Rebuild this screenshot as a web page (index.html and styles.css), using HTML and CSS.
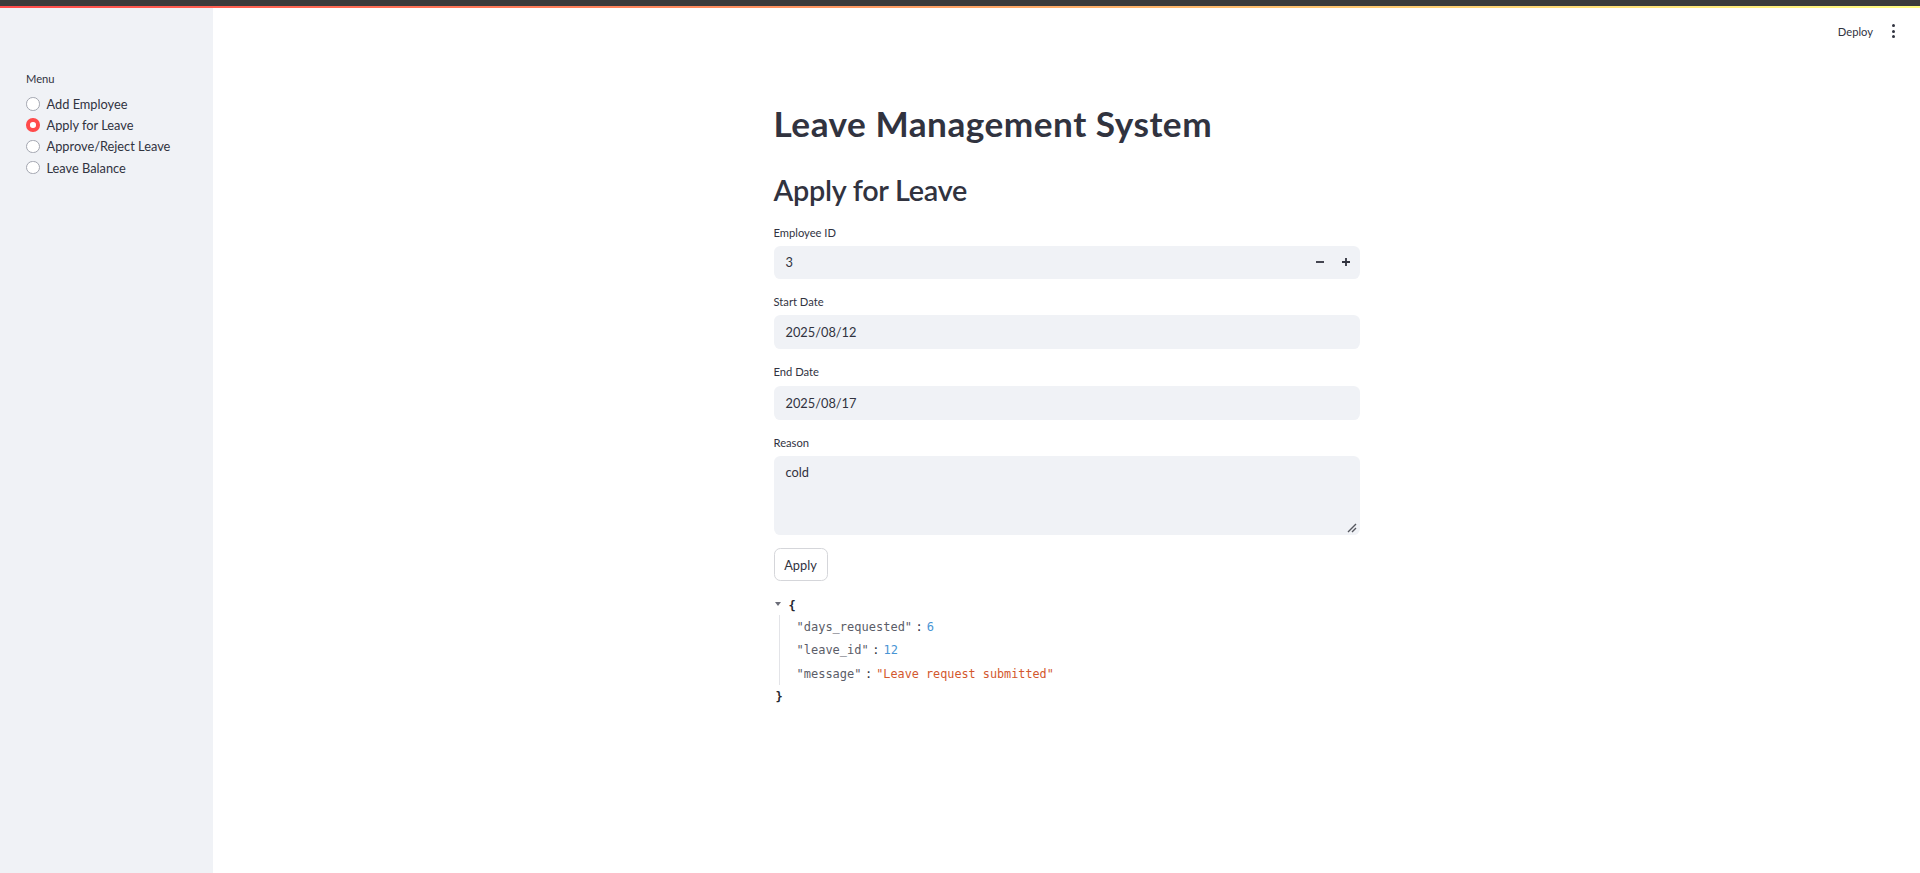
FILE: index.html
```html
<!DOCTYPE html>
<html lang="en">
<head>
<meta charset="utf-8">
<title>Leave Management System</title>
<link rel="stylesheet" href="styles.css">
</head>
<body>
<div class="topbar"></div>
<div class="decoration"></div>
<div class="app">
  <aside class="sidebar">
    <div class="menu-label">Menu</div>
    <div class="radio-group">
      <div class="radio"><span class="circle"></span><span>Add Employee</span></div>
      <div class="radio selected"><span class="circle"></span><span>Apply for Leave</span></div>
      <div class="radio"><span class="circle"></span><span>Approve/Reject Leave</span></div>
      <div class="radio"><span class="circle"></span><span>Leave Balance</span></div>
    </div>
  </aside>
  <main class="main">
    <header class="header">
      <span class="deploy">Deploy</span>
      <span class="kebab"><i></i><i></i><i></i></span>
    </header>
    <div class="block">
      <h1 class="title">Leave Management System</h1>
      <h2 class="subtitle">Apply for Leave</h2>
      <div class="field first">
        <div class="label">Employee ID</div>
        <div class="input number">
          <span class="value">3</span>
          <span class="steppers">
            <svg width="10" height="10" viewBox="0 0 10 10"><path d="M1 5h8" stroke="#31333f" stroke-width="1.8"/></svg>
            <svg width="10" height="10" viewBox="0 0 10 10"><path d="M1 5h8M5 1v8" stroke="#31333f" stroke-width="1.8"/></svg>
          </span>
        </div>
      </div>
      <div class="field">
        <div class="label">Start Date</div>
        <div class="input date"><span class="value">2025/08/12</span></div>
      </div>
      <div class="field">
        <div class="label">End Date</div>
        <div class="input date"><span class="value">2025/08/17</span></div>
      </div>
      <div class="field">
        <div class="label">Reason</div>
        <div class="input textarea">
          <span class="value">cold</span>
          <svg class="grip" width="10" height="10" viewBox="0 0 10 10"><path d="M1 9L9 1M5 9L9 5" stroke="#55575f" stroke-width="1.4"/></svg>
        </div>
      </div>
      <button class="btn">Apply</button>
      <div class="json">
        <div class="jline open"><span class="caret"></span><span class="brace">{</span></div>
        <div class="jbody">
          <div class="jline key"><span class="k">"days_requested"</span><span class="colon">:</span><span class="num">6</span></div>
          <div class="jline key"><span class="k">"leave_id"</span><span class="colon">:</span><span class="num">12</span></div>
          <div class="jline key"><span class="k">"message"</span><span class="colon">:</span><span class="str">"Leave request submitted"</span></div>
        </div>
        <div class="jline close"><span class="brace">}</span></div>
      </div>
    </div>
  </main>
</div>
</body>
</html>
```
FILE: styles.css
```css
* { box-sizing: border-box; }
html, body { margin: 0; padding: 0; }
body {
  font-family: Lato, "Noto Sans", sans-serif;
  color: #31333f;
  background: #ffffff;
  height: 873px;
  overflow: hidden;
  display: flex;
  flex-direction: column;
}
.topbar { height: 6px; background: #3b3b3b; flex: none; }
.decoration { height: 2px; background: linear-gradient(90deg, #ff4b4b, #fffd80); flex: none; }
.app { flex: 1; display: flex; min-height: 0; }

.sidebar {
  width: 213px;
  flex: none;
  background: #f0f2f6;
  padding: 61.4px 0 0 26px;
}
.menu-label { font-size: 11.2px; line-height: 19.2px; }
.radio-group { margin-top: 4.8px; display: flex; flex-direction: column; }
.radio {
  height: 21.2px;
  display: flex;
  align-items: center;
  gap: 7px;
  font-size: 12.8px;
}
.circle {
  width: 13.5px;
  height: 13.5px;
  border-radius: 50%;
  border: 1px solid #a3a6b0;
  background: #ffffff;
  flex: none;
}
.radio.selected .circle {
  border: 4.3px solid #ff4b4b;
  background: #ffffff;
}

.main { flex: 1; display: flex; flex-direction: column; min-width: 0; }
.header {
  height: 46px;
  display: flex;
  justify-content: flex-end;
  align-items: center;
  gap: 19px;
  padding-right: 25px;
  flex: none;
}
.deploy { font-size: 11.2px; }
.kebab { display: flex; flex-direction: column; gap: 2.6px; }
.kebab i { width: 3px; height: 3px; border-radius: 50%; background: #31333f; display: block; }

.block {
  width: 586px;
  margin: 0 auto;
  padding-top: 48.3px;
  display: flex;
  flex-direction: column;
  gap: 13px;
}
.title {
  margin: 0;
  font-size: 35.2px;
  line-height: 1.2;
  font-weight: 700;
  letter-spacing: 0.5px;
}
.subtitle {
  margin: 15px 0 0;
  font-size: 28.8px;
  line-height: 1.2;
  font-weight: 600;
  letter-spacing: -0.26px;
}
.field.first { margin-top: 2.5px; }
.label { font-size: 11.2px; line-height: 19.2px; margin-bottom: 4px; }
.input {
  background: #f0f2f6;
  border-radius: 6.4px;
  display: flex;
  align-items: center;
  padding: 0 12px;
  font-size: 12.8px;
}
.input.number { height: 33px; justify-content: space-between; padding-right: 9px; }
.input.date { height: 34.5px; }
.input.textarea { height: 79px; align-items: flex-start; padding-top: 8px; position: relative; }
.steppers { display: flex; gap: 16px; }
.grip { position: absolute; right: 3px; bottom: 2px; }

.btn {
  align-self: flex-start;
  height: 33px;
  width: 54px;
  padding: 0;
  font-family: inherit;
  font-size: 12.8px;
  color: #31333f;
  background: #ffffff;
  border: 1px solid #d5d6da;
  border-radius: 6.4px;
}

.json {
  font-family: "DejaVu Sans Mono", "Liberation Mono", monospace;
  font-size: 12px;
  color: #31333f;
  margin-top: 1.5px;
}
.jline { display: flex; align-items: center; white-space: pre; }
.jline.open { height: 19.5px; }
.caret {
  width: 0; height: 0;
  border-left: 3.2px solid transparent;
  border-right: 3.2px solid transparent;
  border-top: 4.5px solid #6b6d78;
  margin: 0 8px 4px 1px;
}
.brace { font-weight: 700; color: #262730; }
.jbody { margin-left: 5px; border-left: 1px solid #e3e4e8; padding-left: 17px; }
.jline.key { height: 23.3px; }
.jline.close { height: 23px; padding-left: 2px; }
.k { color: #5b5d68; }
.colon { color: #31333f; margin: 0 4px 0 3.5px; }
.num { color: #4894d4; }
.str { color: #d3582e; font-size: 11.8px; }
```
